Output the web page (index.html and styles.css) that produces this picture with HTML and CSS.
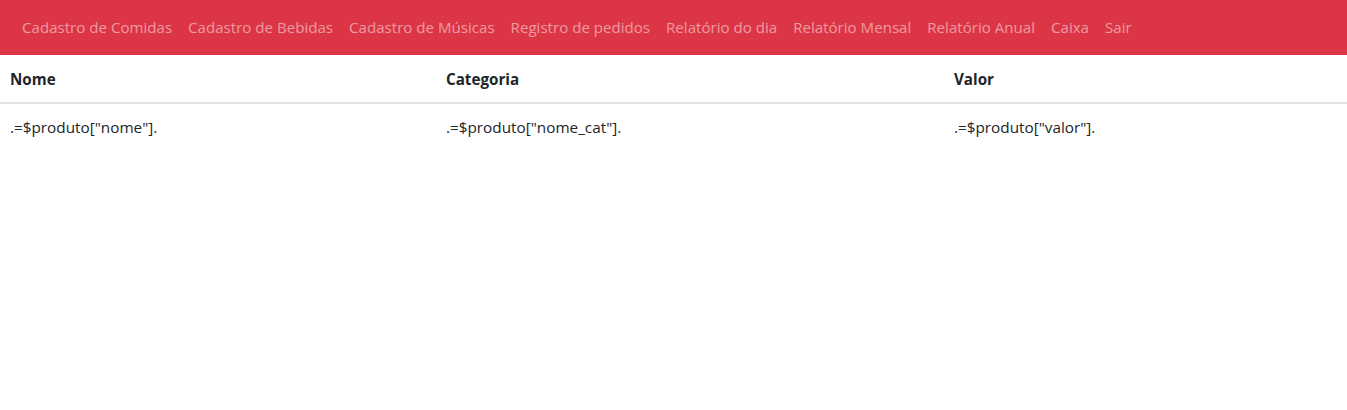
FILE: index.html
```html
<!DOCTYPE html>
<html lang="pt">
<head>
<meta charset="utf-8">
<title>Produtos</title>
<link rel="stylesheet" href="styles.css">
</head>
<body>
<nav class="navbar">
  <ul class="nav">
    <li><a class="nav-link" href="#">Cadastro de Comidas</a></li>
    <li><a class="nav-link" href="#">Cadastro de Bebidas</a></li>
    <li><a class="nav-link" href="#">Cadastro de Músicas</a></li>
    <li><a class="nav-link" href="#">Registro de pedidos</a></li>
    <li><a class="nav-link" href="#">Relatório do dia</a></li>
    <li><a class="nav-link" href="#">Relatório Mensal</a></li>
    <li><a class="nav-link" href="#">Relatório Anual</a></li>
    <li><a class="nav-link" href="#">Caixa</a></li>
    <li><a class="nav-link" href="#">Sair</a></li>
  </ul>
</nav>
<table class="table">
  <thead>
    <tr>
      <th class="col-nome">Nome</th>
      <th class="col-cat">Categoria</th>
      <th class="col-valor">Valor</th>
    </tr>
  </thead>
  <tbody>
    <tr>
      <td>.=$produto["nome"].</td>
      <td>.=$produto["nome_cat"].</td>
      <td>.=$produto["valor"].</td>
    </tr>
  </tbody>
</table>
</body>
</html>
```
FILE: styles.css
```css
* { box-sizing: border-box; }
html, body {
  margin: 0;
  padding: 0;
  background: #fff;
}
body {
  font-family: "Open Sans", "Noto Sans", sans-serif;
  font-size: 15.2px;
  line-height: 24px;
  color: #212529;
}
.navbar {
  background: #dc3545;
  height: 55px;
  padding: 0 8px 2px 14px;
  display: flex;
  align-items: center;
}
.nav {
  list-style: none;
  margin: 0;
  padding: 0;
  display: flex;
}
.nav-link {
  display: block;
  padding: 8px 8px;
  color: rgba(255, 255, 255, 0.5);
  text-decoration: none;
  font-size: 15.1px;
}
.table {
  width: 100%;
  border-collapse: collapse;
}
.table th, .table td {
  text-align: left;
  vertical-align: top;
}
.table th {
  padding: 12px 10px 11px;
  font-weight: 700;
  border-bottom: 2px solid #dee2e6;
}
.table td {
  padding: 11px 10px 12px;
  font-size: 15.3px;
}
.col-nome { width: 436px; }
.col-cat { width: 508px; }
```
